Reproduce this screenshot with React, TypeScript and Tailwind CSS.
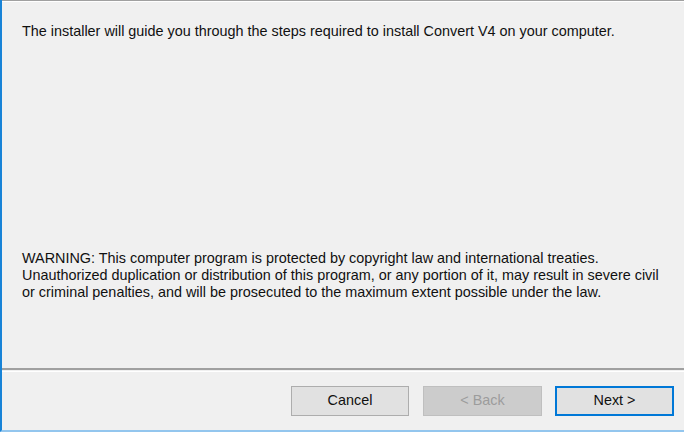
export default function App() {
  return (
    <div
      className="w-[684px] h-[432px] bg-[#f0f0f0] flex flex-col border-l-2 border-b-2 border-l-[#1883d7] border-b-[#93c6ee] text-[14.4px] text-[#101010] overflow-hidden"
      style={{ fontFamily: '"Liberation Sans", Arial, sans-serif' }}
    >
      {/* header separator */}
      <div className="h-px bg-[#a0a0a0]" />
      <div className="h-px bg-white" />

      {/* body */}
      <div className="flex-1 flex flex-col px-[20px] pt-[21px] leading-[17px] whitespace-nowrap">
        <p>The installer will guide you through the steps required to install Convert V4 on your computer.</p>
        <p className="mt-[210px]">
          WARNING: This computer program is protected by copyright law and international treaties.
          <br />
          Unauthorized duplication or distribution of this program, or any portion of it, may result in severe civil
          <br />
          or criminal penalties, and will be prosecuted to the maximum extent possible under the law.
        </p>
      </div>

      {/* footer separator */}
      <div className="h-[2px] bg-[#a0a0a0]" />
      <div className="h-px" />
      <div className="h-px bg-white" />

      {/* buttons */}
      <div className="flex items-center justify-end pt-[14px] pb-[14px] pr-[10px]">
        <button className="w-[118px] h-[30px] bg-[#e1e1e1] border border-[#adadad] text-[#101010]">
          Cancel
        </button>
        <button
          disabled
          className="ml-[14px] w-[119px] h-[30px] bg-[#cccccc] border border-[#bfbfbf] text-[#9c9c9c]"
        >
          &lt; Back
        </button>
        <button className="ml-[13px] w-[119px] h-[30px] bg-[#e1e1e1] border-2 border-[#0078d7] text-[#101010]">
          Next &gt;
        </button>
      </div>
    </div>
  );
}
